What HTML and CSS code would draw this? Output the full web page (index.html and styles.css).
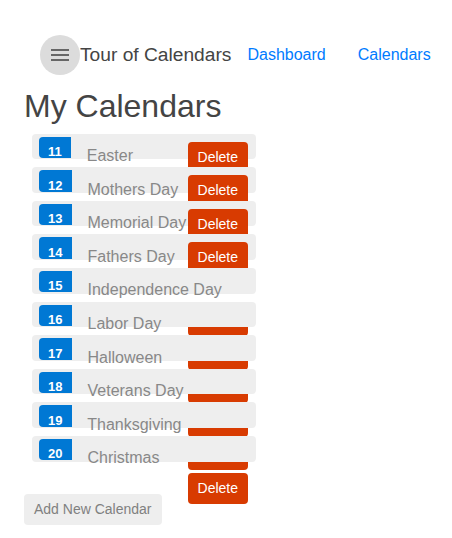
FILE: index.html
```html
<!DOCTYPE html>
<html lang="en">
<head>
<meta charset="utf-8">
<title>Tour of Calendars</title>
<link rel="stylesheet" href="styles.css">
</head>
<body>
<div class="app">
  <header class="topbar">
    <button class="menu-btn" aria-label="Menu">
      <svg width="24" height="24" viewBox="0 0 24 24"><rect x="3" y="6" width="18" height="2"/><rect x="3" y="11" width="18" height="2"/><rect x="3" y="16" width="18" height="2"/></svg>
    </button>
    <span class="title">Tour of Calendars</span>
    <nav class="nav"><a href="#">Dashboard</a><a href="#">Calendars</a></nav>
  </header>
  <h2 class="heading">My Calendars</h2>
  <ul class="calendars">
    <li><a class="cal-link" href="#"><span class="badge">11</span> Easter</a><button class="delete">Delete</button></li>
    <li><a class="cal-link" href="#"><span class="badge">12</span> Mothers Day</a><button class="delete">Delete</button></li>
    <li><a class="cal-link" href="#"><span class="badge">13</span> Memorial Day</a><button class="delete">Delete</button></li>
    <li><a class="cal-link" href="#"><span class="badge">14</span> Fathers Day</a><button class="delete">Delete</button></li>
    <li><a class="cal-link" href="#"><span class="badge">15</span> Independence Day</a><button class="delete">Delete</button></li>
    <li><a class="cal-link" href="#"><span class="badge">16</span> Labor Day</a><button class="delete">Delete</button></li>
    <li><a class="cal-link" href="#"><span class="badge">17</span> Halloween</a><button class="delete">Delete</button></li>
    <li><a class="cal-link" href="#"><span class="badge">18</span> Veterans Day</a><button class="delete">Delete</button></li>
    <li><a class="cal-link" href="#"><span class="badge">19</span> Thanksgiving</a><button class="delete">Delete</button></li>
    <li><a class="cal-link" href="#"><span class="badge">20</span> Christmas</a><button class="delete">Delete</button></li>
  </ul>
  <div class="actions"><button class="add">Add New Calendar</button></div>
</div>
</body>
</html>
```

FILE: styles.css
```css
html, body {
  margin: 0;
  padding: 0;
  background: #fff;
}

body {
  font-family: "Liberation Sans", Arial, sans-serif;
  font-size: 16px;
  line-height: 1.5;
  color: #444;
}

.app {
  padding: 0 24px;
}

.topbar {
  display: flex;
  align-items: center;
  margin: 35px 0 0;
  padding-left: 16px;
  white-space: nowrap;
}

.menu-btn {
  flex-shrink: 0;
  width: 40px;
  height: 40px;
  border: 0;
  padding: 0;
  border-radius: 50%;
  background: #dcdcdc;
  display: flex;
  align-items: center;
  justify-content: center;
  fill: #666;
}

.title {
  flex-shrink: 0;
  font-size: 19.2px;
  line-height: normal;
  color: #444;
}

.nav {
  display: flex;
  flex-shrink: 0;
}

.nav a {
  padding: 0 16px;
  font-size: 16px;
  line-height: normal;
  color: #007bff;
  text-decoration: none;
}

.heading {
  margin: 12.2px 0 8px;
  font-size: 32px;
  line-height: 1.2;
  font-weight: normal;
  color: #444;
}

.calendars {
  list-style: none;
  margin: 0 0 32px;
  padding: 0;
  width: 240px;
}

.calendars li {
  position: relative;
  box-sizing: border-box;
  height: 25.6px;
  margin: 8px;
  padding: 8px 8px 0;
  line-height: 28.6px;
  background: #eee;
  border-radius: 4px;
}

.cal-link {
  color: #888;
  text-decoration: none;
}

.badge {
  display: inline-block;
  position: relative;
  top: -5px;
  left: -1px;
  box-sizing: border-box;
  height: 21.4px;
  min-width: 16px;
  padding: 8.4px 9.1px 0;
  margin-right: 10.4px;
  font-size: 13px;
  font-weight: bold;
  line-height: 13px;
  color: #fff;
  text-align: right;
  background: #0078d4;
  border-radius: 4px 0 0 4px;
}

.delete {
  float: right;
  position: relative;
  border: 0;
  padding: 5px 10px;
  border-radius: 4px;
  background: #d83b01;
  color: #fff;
  font-family: "Liberation Sans", Arial, sans-serif;
  font-size: 14px;
  line-height: 1.5;
}

.add {
  border: 0;
  padding: 5px 10px;
  border-radius: 4px;
  background: #eee;
  color: #808080;
  font-family: "Liberation Sans", Arial, sans-serif;
  font-size: 14px;
  line-height: 1.5;
}
```
